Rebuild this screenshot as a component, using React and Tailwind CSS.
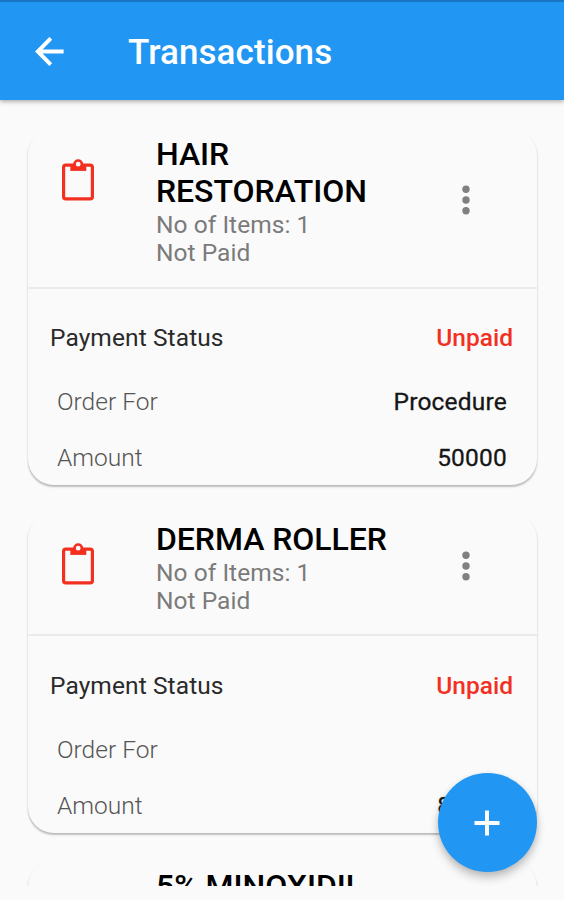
import React from "react";

const orders = [
  {
    id: 1,
    name: "HAIR RESTORATION",
    items: 1,
    type: "Procedure",
    amount: "50000",
  },
  { id: 2, name: "DERMA ROLLER", items: 1, type: "", amount: "80000" },
  { id: 3, name: "5% MINOXIDIL" },
];

const ClipboardIcon = () => (
  <svg viewBox="0 0 32 43" className="w-8 h-[43px]" fill="none" stroke="#f2301f">
    <rect x="1.6" y="7.1" width="28.8" height="33.8" rx="2.2" strokeWidth="3.2" />
    <path d="M8.3 7H24.3V12.9H8.3Z" fill="#f2301f" stroke="none" />
    <circle cx="16.2" cy="6.2" r="3.7" strokeWidth="2.6" fill="#fafafa" />
  </svg>
);

const TransactionCard = ({ order }) => {
  return (
    <div className="shrink-0 rounded-[26px] bg-[#fafafa] shadow-[0_2px_2px_-0.5px_rgba(0,0,0,0.22),0_1px_2px_rgba(0,0,0,0.07)]">
      <div className="flex border-b-2 border-[#ebebeb] pt-[7.5px] pb-[19.5px]">
        <div className="w-[128px] pl-[34px] pt-[21.5px]">
          <ClipboardIcon />
        </div>
        <div className="w-[250px]">
          <h2 className="text-[32px] leading-[37px] font-medium tracking-[-0.05px] text-black">
            {order.name}
          </h2>
          {order.items && (
            <div className="pt-px text-[24.5px] leading-[28px] tracking-[0.05px] text-[#7b7b7b]">
              <p>No of Items: {order.items}</p>
              <p>Not Paid</p>
            </div>
          )}
        </div>
        {order.items && (
          <div className="flex flex-1 items-center pl-[56px] pb-[3px]">
            <svg viewBox="0 0 8 30" className="w-2 h-[30px]" fill="#808080">
              <circle cx="4" cy="4.3" r="3.7" />
              <circle cx="4" cy="15" r="3.7" />
              <circle cx="4" cy="25.7" r="3.7" />
            </svg>
          </div>
        )}
      </div>

      {order.amount && (
        <div className="pl-[22px] pr-[24px] pt-[34.5px] pb-[12px] text-[24.5px] leading-[30px]">
          <div className="flex justify-between">
            <span className="tracking-[0.1px] text-[#2a2a2a]">
              Payment Status
            </span>
            <span className="font-medium text-[#f2301f]">Unpaid</span>
          </div>
          <div className="mt-[34px] flex justify-between pl-[7px] pr-[6px]">
            <span className="font-light text-[#555555]">Order For</span>
            <span className="tracking-[0.2px] text-[#161616] [-webkit-text-stroke:0.3px_#161616]">
              {order.type}
            </span>
          </div>
          <div className="mt-[26px] flex justify-between pl-[7px] pr-[6px]">
            <span className="font-light text-[#555555]">Amount</span>
            <span className="tracking-[0.2px] text-[#161616] [-webkit-text-stroke:0.3px_#161616]">
              {order.amount}
            </span>
          </div>
        </div>
      )}
    </div>
  );
};

const App = () => {
  return (
    <div className="relative flex h-[900px] w-[564px] flex-col overflow-hidden bg-[#fafafa] font-['Roboto',sans-serif]">
      <header className="relative z-10 flex h-[100px] shrink-0 items-center border-t-2 border-[#1976c5] bg-[#2196f3] pl-[35px] text-white shadow-[0_1px_5px_rgba(0,0,0,0.4)]">
        <svg
          viewBox="4 4 16 16"
          className="w-[29px] h-[29px]"
          fill="none"
          stroke="currentColor"
          strokeWidth="2.2"
        >
          <path d="M19.8 12H6M12.7 4.8L5.5 12l7.2 7.2" />
        </svg>
        <h1 className="pl-16 pt-[5px] text-[35px] font-medium tracking-[0.08px]">
          Transactions
        </h1>
      </header>

      <main className="flex h-[786px] flex-col gap-7 overflow-hidden pt-[28.5px] pl-[28px] pr-[27px]">
        {orders.map((order) => (
          <TransactionCard key={order.id} order={order} />
        ))}
      </main>

      <button className="absolute left-[438px] top-[773px] flex h-[99px] w-[99px] items-center justify-center rounded-full bg-[#2196f3] shadow-[0_6px_10px_rgba(0,0,0,0.2),0_2px_6px_rgba(0,0,0,0.1)]">
        <svg
          viewBox="0 0 26 26"
          className="mr-px w-[26px] h-[26px]"
          stroke="#fff"
          strokeWidth="4"
        >
          <path d="M13 0.5V25.5M0.5 13H25.5" />
        </svg>
      </button>
    </div>
  );
};

export default App;
